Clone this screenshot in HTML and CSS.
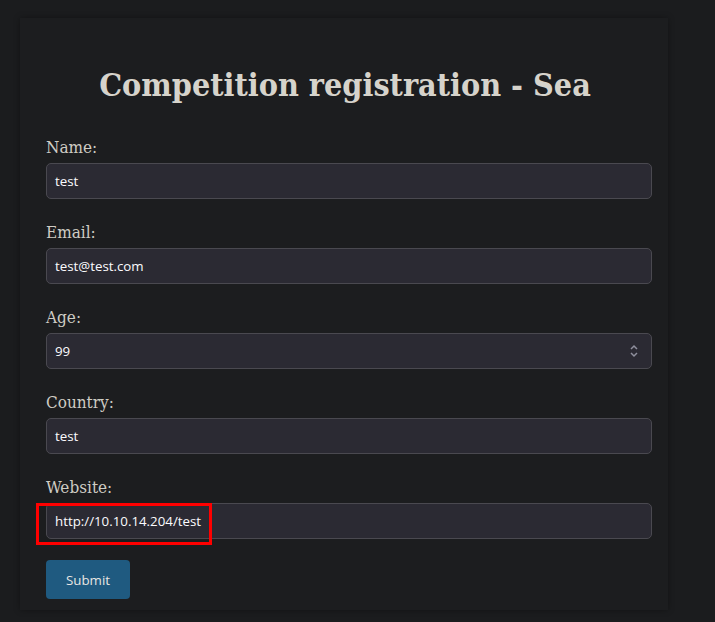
FILE: index.html
```html
<!DOCTYPE html>
<html>
<head>
<meta charset="utf-8">
<link rel="stylesheet" href="styles.css">
</head>
<body>
<div class="card">
  <h1 class="title">Competition registration - Sea</h1>
  <form class="form">
    <div class="field">
      <label class="label">Name:</label>
      <div class="input">test</div>
    </div>
    <div class="field">
      <label class="label">Email:</label>
      <div class="input">test@test.com</div>
    </div>
    <div class="field">
      <label class="label">Age:</label>
      <div class="input number"><span>99</span>
        <svg class="spin" width="10" height="16" viewBox="0 0 10 16"><path d="M2 6 L5 3 L8 6 M2 10 L5 13 L8 10" fill="none" stroke="#8f8f9d" stroke-width="1.5"/></svg>
      </div>
    </div>
    <div class="field">
      <label class="label">Country:</label>
      <div class="input">test</div>
    </div>
    <div class="field">
      <label class="label">Website:</label>
      <div class="input">http://10.10.14.204/test<span class="highlight"></span></div>
    </div>
    <div class="button">Submit</div>
  </form>
</div>
</body>
</html>
```
FILE: styles.css
```css
html, body {
  margin: 0;
  padding: 0;
  background: #1b1c1e;
  height: 622px;
  overflow: hidden;
}
body {
  padding-top: 18px;
  padding-left: 20px;
  box-sizing: border-box;
}
.card {
  width: 648px;
  height: 592px;
  background: #1c1d1f;
  box-shadow: 0 0 6px rgba(0,0,0,0.35);
  box-sizing: border-box;
  padding: 47px 14px 0 26px;
}
.title {
  margin: 0 0 30px 0;
  font-family: "DejaVu Serif Condensed", "DejaVu Serif", serif;
  font-weight: bold;
  font-size: 32px;
  line-height: 40px;
  color: #d6d3cb;
  text-align: center;
  padding-right: 10px;
}
.form {
  display: flex;
  flex-direction: column;
}
.field {
  display: flex;
  flex-direction: column;
  margin-bottom: 21px;
}
.label {
  font-family: "DejaVu Serif Condensed", "DejaVu Serif", serif;
  font-size: 17px;
  line-height: 24px;
  color: #cfccc4;
  margin-bottom: 4px;
}
.input {
  position: relative;
  width: 606px;
  height: 36px;
  box-sizing: border-box;
  background: #2b2a33;
  border: 1px solid #4a4950;
  border-radius: 5px;
  padding: 0 8px;
  display: flex;
  align-items: center;
  font-family: "Open Sans", sans-serif;
  font-size: 13.3px;
  color: #fbfbfe;
}
.number {
  justify-content: space-between;
  padding-right: 12px;
}
.highlight {
  position: absolute;
  left: -11px;
  top: -1px;
  width: 176px;
  height: 42px;
  box-sizing: border-box;
  border: 3px solid #ff0000;
}
.button {
  align-self: flex-start;
  margin-top: 0;
  width: 84px;
  height: 39px;
  background: #1f5a80;
  border-radius: 4px;
  color: #e8e6e3;
  font-family: "Open Sans", sans-serif;
  font-size: 13.3px;
  display: flex;
  align-items: center;
  justify-content: center;
}
```
